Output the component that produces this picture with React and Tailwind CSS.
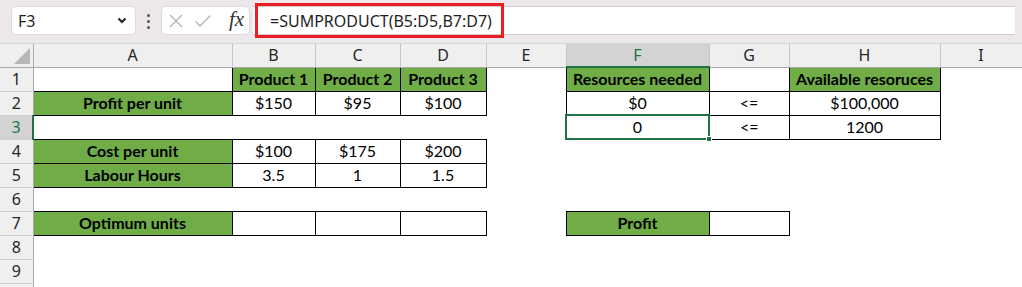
import React from 'react';

const colWidths = [33, 199, 83, 85, 86, 80, 143, 80, 151, 82];
const letters = ['A', 'B', 'C', 'D', 'E', 'F', 'G', 'H', 'I'];

// cell helpers
const G = (t) => ({ t, kind: 'green' });
const B = (t = '') => ({ t, kind: 'box' });
const E = null;

const rows = [
  [E, G('Product 1'), G('Product 2'), G('Product 3'), E, G('Resources needed'), B(), G('Available resoruces'), E],
  [G('Profit per unit'), B('$150'), B('$95'), B('$100'), E, B('$0'), B('<='), B('$100,000'), E],
  [E, E, E, E, E, { t: '0', kind: 'sel' }, B('<='), B('1200'), E],
  [G('Cost per unit'), B('$100'), B('$175'), B('$200'), E, E, E, E, E],
  [G('Labour Hours'), B('3.5'), B('1'), B('1.5'), E, E, E, E, E],
  [E, E, E, E, E, E, E, E, E],
  [G('Optimum units'), B(), B(), B(), E, G('Profit'), B(), E, E],
  [E, E, E, E, E, E, E, E, E],
  [E, E, E, E, E, E, E, E, E],
  [E, E, E, E, E, E, E, E, E],
];

const Cell = ({ cell }) => {
  const base = "p-0 text-center align-middle text-[16px] leading-none text-black font-['Lato',sans-serif]";
  if (!cell) return <td className={base}></td>;
  if (cell.kind === 'green') {
    return <td className={`${base} bg-[#70ad47] font-bold border border-black`}>{cell.t}</td>;
  }
  if (cell.kind === 'sel') {
    return (
      <td className={`${base} relative border-2 border-[#217346]`}>
        {cell.t}
        <span className="absolute right-[-4px] bottom-[-4px] w-[6px] h-[6px] bg-[#217346] border border-white" />
      </td>
    );
  }
  return <td className={`${base} border border-black`}>{cell.t}</td>;
};

const FormulaBar = () => (
  <div className="h-[44px] bg-[#ebe7eb] border-b border-[#d9d5d9] flex items-start pt-[6px] font-['Noto_Sans',sans-serif]">
    {/* Name box */}
    <div className="ml-[11px] w-[125px] h-[29px] bg-white rounded-[5px] border border-[#dedbde] flex items-center justify-between pl-[6px] pr-[8px]">
      <span className="text-[16px] text-[#1f1f1f]">F3</span>
      <svg width="10" height="7" viewBox="0 0 10 7">
        <polyline points="1.5,1.5 5,5 8.5,1.5" fill="none" stroke="#222" strokeWidth="2" />
      </svg>
    </div>
    {/* Dots */}
    <div className="ml-[11px] mt-[8px] flex flex-col gap-[3px]">
      <span className="w-[3px] h-[3px] bg-[#555] rounded-full" />
      <span className="w-[3px] h-[3px] bg-[#555] rounded-full" />
      <span className="w-[3px] h-[3px] bg-[#555] rounded-full" />
    </div>
    {/* Cancel / Enter / fx */}
    <div className="ml-[11px] w-[89px] h-[29px] bg-white rounded-[5px] border border-[#dedbde] flex items-center pl-[6px]">
      <svg width="16" height="16" viewBox="0 0 16 16">
        <path d="M2 2 L14 14 M14 2 L2 14" stroke="#b3b3b3" strokeWidth="1.3" fill="none" />
      </svg>
      <svg width="18" height="16" viewBox="0 0 18 16" className="ml-[10px]">
        <path d="M1.5 8.5 L6 13 L16.5 2.5" stroke="#b3b3b3" strokeWidth="1.3" fill="none" />
      </svg>
      <span className="ml-[17px] text-[21px] leading-none italic text-[#333] font-['Liberation_Serif',serif] -mt-[3px]">fx</span>
    </div>
    {/* Formula input */}
    <div className="ml-[3px] mr-[7px] flex-1 h-[29px] bg-white border-y border-[#cfcbcf] flex items-center">
      <div className="ml-[2px] w-[249px] h-[35px] border-[3px] border-[#ec1c24] flex items-center pl-[12px]">
        <span className="text-[16px] text-[#1f1f1f] whitespace-nowrap">=SUMPRODUCT(B5:D5,B7:D7)</span>
      </div>
    </div>
  </div>
);

const App = () => {
  return (
    <div className="w-[1022px] h-[287px] overflow-hidden bg-white">
      <FormulaBar />
      <table className="table-fixed border-collapse w-[1022px]">
        <colgroup>
          {colWidths.map((w, i) => (
            <col key={i} style={{ width: w }} />
          ))}
        </colgroup>
        <thead>
          <tr className="h-[23px]">
            <th className="p-0 bg-[#efefef] border-r border-b border-[#a9a9a9] relative">
              <svg width="16" height="16" viewBox="0 0 16 16" className="absolute right-[3px] bottom-[3px]">
                <polygon points="16,0 16,16 0,16" fill="#b7b7b7" />
              </svg>
            </th>
            {letters.map((l) =>
              l === 'F' ? (
                <th key={l} className="p-0 bg-[#d3d3d3] border-r border-[#c6c6c6] border-b-2 border-b-[#217346] text-[16px] leading-none font-normal text-[#217346] font-['Noto_Sans',sans-serif]">
                  {l}
                </th>
              ) : (
                <th key={l} className="p-0 bg-[#efefef] border-r border-[#c6c6c6] border-b border-b-[#a9a9a9] text-[16px] leading-none font-normal text-[#262626] font-['Noto_Sans',sans-serif]">
                  {l}
                </th>
              )
            )}
          </tr>
        </thead>
        <tbody>
          {rows.map((row, r) => (
            <tr key={r} className="h-[24px]">
              {r === 2 ? (
                <td className="p-0 bg-[#d3d3d3] border-r-2 border-r-[#217346] border-b border-b-[#d0d0d0] text-center text-[16px] leading-none text-[#217346] font-['Noto_Sans',sans-serif]">
                  {r + 1}
                </td>
              ) : (
                <td className="p-0 bg-[#efefef] border-r border-r-[#a9a9a9] border-b border-b-[#d0d0d0] text-center text-[16px] leading-none text-[#262626] font-['Noto_Sans',sans-serif]">
                  {r < 9 ? r + 1 : ''}
                </td>
              )}
              {row.map((cell, c) => (
                <Cell key={c} cell={cell} />
              ))}
            </tr>
          ))}
        </tbody>
      </table>
    </div>
  );
};

export default App;
